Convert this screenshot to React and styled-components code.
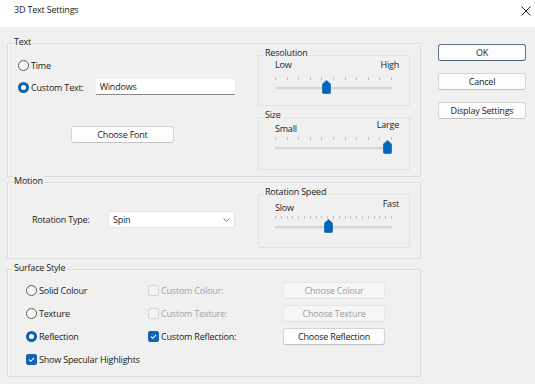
import React from 'react';
import styled, { createGlobalStyle } from 'styled-components';

const GlobalStyle = createGlobalStyle`
  html, body {
    margin: 0;
    padding: 0;
    background: #f0f0f0;
  }
  body {
    font-family: "Open Sans", "Noto Sans", sans-serif;
    font-size: 9px;
    letter-spacing: -0.2px;
    color: #1b1b1b;
  }
`;

export default function App() {
  return (
    <Window>
      <GlobalStyle />
      <TitleBar>
        <Title>3D Text Settings</Title>
        <CloseIcon width="10" height="10" viewBox="0 0 10 10">
          <path d="M0.5 0.5 L9.5 9.5 M9.5 0.5 L0.5 9.5" stroke="#222" strokeWidth="1" />
        </CloseIcon>
      </TitleBar>

      <Body>
        <Groups>
          <Group $height={134}>
            <Legend $lift={8}>Text</Legend>
            <GroupInner>
              <LeftPane>
                <OptionRow $top={9}>
                  <Radio />
                  <span>Time</span>
                </OptionRow>
                <OptionRow $top={6}>
                  <Radio $checked />
                  <span>Custom Text:</span>
                  <TextInput>Windows</TextInput>
                </OptionRow>
                <PushButton $width={103} $top={31} $left={53}>Choose Font</PushButton>
              </LeftPane>
              <RightPane>
                <SubGroup $height={51} $top={7}>
                  <Legend $lift={9}>Resolution</Legend>
                  <SubBody>
                    <EndLabels $top={0} $height={12}>
                      <span>Low</span>
                      <span>High</span>
                    </EndLabels>
                    <Slider ticks={11} value={0.44} top={5} />
                  </SubBody>
                </SubGroup>
                <SubGroup $height={53} $top={11}>
                  <Legend $lift={9}>Size</Legend>
                  <SubBody>
                    <EndLabels $top={-2} $height={16}>
                      <LowLabel>Small</LowLabel>
                      <HighLabel>Large</HighLabel>
                    </EndLabels>
                    <Slider ticks={11} value={0.96} top={1} />
                  </SubBody>
                </SubGroup>
              </RightPane>
            </GroupInner>
          </Group>

          <Group $height={77} $top={5}>
            <Legend $lift={8}>Motion</Legend>
            <GroupInner>
              <LeftPane>
                <TypeRow>
                  <FieldLabel>Rotation Type:</FieldLabel>
                  <Select>
                    <span>Spin</span>
                    <svg width="7" height="4" viewBox="0 0 7 4">
                      <path d="M0.5 0.5 L3.5 3.5 L6.5 0.5" fill="none" stroke="#6d6d6d" strokeWidth="0.9" />
                    </svg>
                  </Select>
                </TypeRow>
              </LeftPane>
              <RightPane>
                <SubGroup $height={54} $top={7}>
                  <Legend $lift={9}>Rotation Speed</Legend>
                  <SubBody>
                    <EndLabels $top={0} $height={16}>
                      <LowLabel>Slow</LowLabel>
                      <HighLabel>Fast</HighLabel>
                    </EndLabels>
                    <Slider ticks={21} value={0.46} top={1} />
                  </SubBody>
                </SubGroup>
              </RightPane>
            </GroupInner>
          </Group>

          <Group $height={108} $top={10}>
            <Legend $lift={8}>Surface Style</Legend>
            <SurfaceGrid>
              <Cell><Radio /><span>Solid Colour</span></Cell>
              <Cell $disabled><Check $disabled /><span>Custom Colour:</span></Cell>
              <PushButton $width={102} $disabled>Choose Colour</PushButton>

              <Cell><Radio /><span>Texture</span></Cell>
              <Cell $disabled><Check $disabled /><span>Custom Texture:</span></Cell>
              <PushButton $width={102} $disabled>Choose Texture</PushButton>

              <Cell><Radio $checked /><span>Reflection</span></Cell>
              <Cell><Check $checked /><span>Custom Reflection:</span></Cell>
              <PushButton $width={102}>Choose Reflection</PushButton>

              <Cell $span={3}><Check $checked /><span>Show Specular Highlights</span></Cell>
            </SurfaceGrid>
          </Group>
        </Groups>

        <Actions>
          <PushButton $width={88} $default>OK</PushButton>
          <PushButton $width={88}>Cancel</PushButton>
          <PushButton $width={88}>Display Settings</PushButton>
        </Actions>
      </Body>
    </Window>
  );
}

function Radio({ $checked }) {
  return <RadioDot $checked={$checked} />;
}

function Check({ $checked, $disabled }) {
  return (
    <CheckBox $checked={$checked} $disabled={$disabled}>
      {$checked && (
        <svg width="9" height="9" viewBox="0 0 9 9">
          <path d="M2 4.6 L3.8 6.3 L7 2.8" fill="none" stroke="#fff" strokeWidth="1.1" />
        </svg>
      )}
    </CheckBox>
  );
}

function Slider({ ticks, value, top }) {
  return (
    <SliderBox $top={top}>
      <TickRow>
        {Array.from({ length: ticks }).map((_, i) => (
          <Tick key={i} />
        ))}
      </TickRow>
      <Track />
      <Thumb width="9" height="14" viewBox="0 0 9 14" style={{ left: `${value * 117 - 4.5}px` }}>
        <path d="M4.5 0.5 L8.5 4 L8.5 12.5 Q8.5 13.5 7.5 13.5 L1.5 13.5 Q0.5 13.5 0.5 12.5 L0.5 4 Z" fill="#0067c0" stroke="#0058a8" strokeWidth="0.6" />
      </Thumb>
    </SliderBox>
  );
}

const Window = styled.div`
  width: 535px;
  height: 384px;
  display: flex;
  flex-direction: column;
  overflow: hidden;
`;

const TitleBar = styled.div`
  height: 27px;
  flex: none;
  background: #ffffff;
  display: flex;
  align-items: flex-start;
  justify-content: space-between;
  padding: 3px 4px 0 14px;
  box-sizing: border-box;
`;

const Title = styled.div`
  line-height: 14px;
  color: #1b1b1b;
`;

const CloseIcon = styled.svg`
  margin-top: 3px;
`;

const Body = styled.div`
  display: flex;
  padding: 16px 0 0 7px;
`;

const Groups = styled.div`
  width: 414px;
  display: flex;
  flex-direction: column;
`;

const Group = styled.div`
  box-sizing: border-box;
  height: ${(p) => p.$height}px;
  margin-top: ${(p) => p.$top || 0}px;
  border: 1px solid #dcdcdc;
  box-shadow: inset 1px 1px 0 #f8f8f8;
`;

const Legend = styled.div`
  width: fit-content;
  height: 12px;
  line-height: 12px;
  margin: -${(p) => p.$lift}px 0 0 5px;
  padding: 0 1px;
  background: #f0f0f0;
  color: #1b1b1b;
`;

const GroupInner = styled.div`
  display: flex;
  align-items: flex-start;
`;

const LeftPane = styled.div`
  width: 250px;
  padding-left: 10px;
  box-sizing: border-box;
  display: flex;
  flex-direction: column;
  align-items: flex-start;
`;

const RightPane = styled.div`
  width: 152px;
  display: flex;
  flex-direction: column;
`;

const SubGroup = styled.div`
  box-sizing: border-box;
  height: ${(p) => p.$height}px;
  margin-top: ${(p) => p.$top}px;
  border: 1px solid #e2e2e2;
`;

const SubBody = styled.div`
  padding: 0 10px 0 16px;
`;

const EndLabels = styled.div`
  display: flex;
  justify-content: space-between;
  height: ${(p) => p.$height}px;
  margin-top: ${(p) => p.$top}px;
  line-height: 12px;
`;

const LowLabel = styled.span`
  align-self: flex-end;
`;

const HighLabel = styled.span`
  align-self: flex-start;
`;

const SliderBox = styled.div`
  position: relative;
  width: 117px;
  height: 18px;
  margin-top: ${(p) => p.$top}px;
`;

const TickRow = styled.div`
  display: flex;
  justify-content: space-between;
  padding-top: 1px;
`;

const Tick = styled.span`
  width: 1px;
  height: 3px;
  background: #c4c4c4;
`;

const Track = styled.div`
  margin-top: 7px;
  height: 2px;
  background: #d6d6d6;
  border-bottom: 1px solid #e9e9e9;
`;

const Thumb = styled.svg`
  position: absolute;
  top: 4px;
`;

const OptionRow = styled.div`
  display: flex;
  align-items: center;
  gap: 2px;
  height: 16px;
  margin-top: ${(p) => p.$top}px;
`;

const RadioDot = styled.span`
  box-sizing: border-box;
  width: 11px;
  height: 11px;
  border-radius: 50%;
  flex: none;
  background: ${(p) => (p.$checked ? '#ffffff' : '#f7f7f7')};
  border: ${(p) => (p.$checked ? '3px solid #0f5fa8' : '1px solid #5c5c5c')};
`;

const CheckBox = styled.span`
  box-sizing: border-box;
  width: 11px;
  height: 11px;
  border-radius: 2px;
  flex: none;
  display: flex;
  align-items: center;
  justify-content: center;
  background: ${(p) => (p.$checked ? '#1464b4' : p.$disabled ? '#f3f3f3' : '#ffffff')};
  border: 1px solid ${(p) => (p.$checked ? '#1464b4' : p.$disabled ? '#d6d6d6' : '#6a6a6a')};
`;

const TextInput = styled.div`
  box-sizing: border-box;
  width: 139px;
  height: 16px;
  margin-left: 10px;
  padding: 0 4px;
  line-height: 15px;
  background: #ffffff;
  border-radius: 2px 2px 0 0;
  border-bottom: 1px solid #8a8a8a;
`;

const PushButton = styled.div`
  box-sizing: border-box;
  width: ${(p) => p.$width}px;
  height: 17px;
  margin-top: ${(p) => p.$top || 0}px;
  margin-left: ${(p) => p.$left || 0}px;
  display: flex;
  align-items: center;
  justify-content: center;
  border-radius: 3px;
  background: ${(p) => (p.$disabled ? '#f6f6f6' : '#fdfdfd')};
  color: ${(p) => (p.$disabled ? '#9c9c9c' : '#1b1b1b')};
  border: 1px solid ${(p) => (p.$default ? '#5e7489' : p.$disabled ? '#e6e6e6' : '#d4d4d4')};
  border-bottom-color: ${(p) => (p.$default ? '#4c6276' : p.$disabled ? '#e0e0e0' : '#c2c2c2')};
`;

const TypeRow = styled.div`
  display: flex;
  align-items: center;
  height: 17px;
  margin-top: 24px;
  padding-left: 14px;
`;

const FieldLabel = styled.span`
  width: 76px;
`;

const Select = styled.div`
  box-sizing: border-box;
  width: 127px;
  height: 17px;
  display: flex;
  align-items: center;
  justify-content: space-between;
  padding: 0 4px 0 4px;
  background: #ffffff;
  border: 1px solid #e4e4e4;
  border-radius: 2px;
`;

const SurfaceGrid = styled.div`
  display: grid;
  grid-template-columns: 122px 135px 102px;
  grid-auto-rows: 23px;
  align-items: center;
  margin-top: 5px;
  padding-left: 18px;
`;

const Cell = styled.div`
  display: flex;
  align-items: center;
  gap: 2px;
  grid-column: span ${(p) => p.$span || 1};
  color: ${(p) => (p.$disabled ? '#a3a3a3' : '#1b1b1b')};
`;

const Actions = styled.div`
  display: flex;
  flex-direction: column;
  gap: 12px;
  margin: 1px 0 0 17px;
`;
